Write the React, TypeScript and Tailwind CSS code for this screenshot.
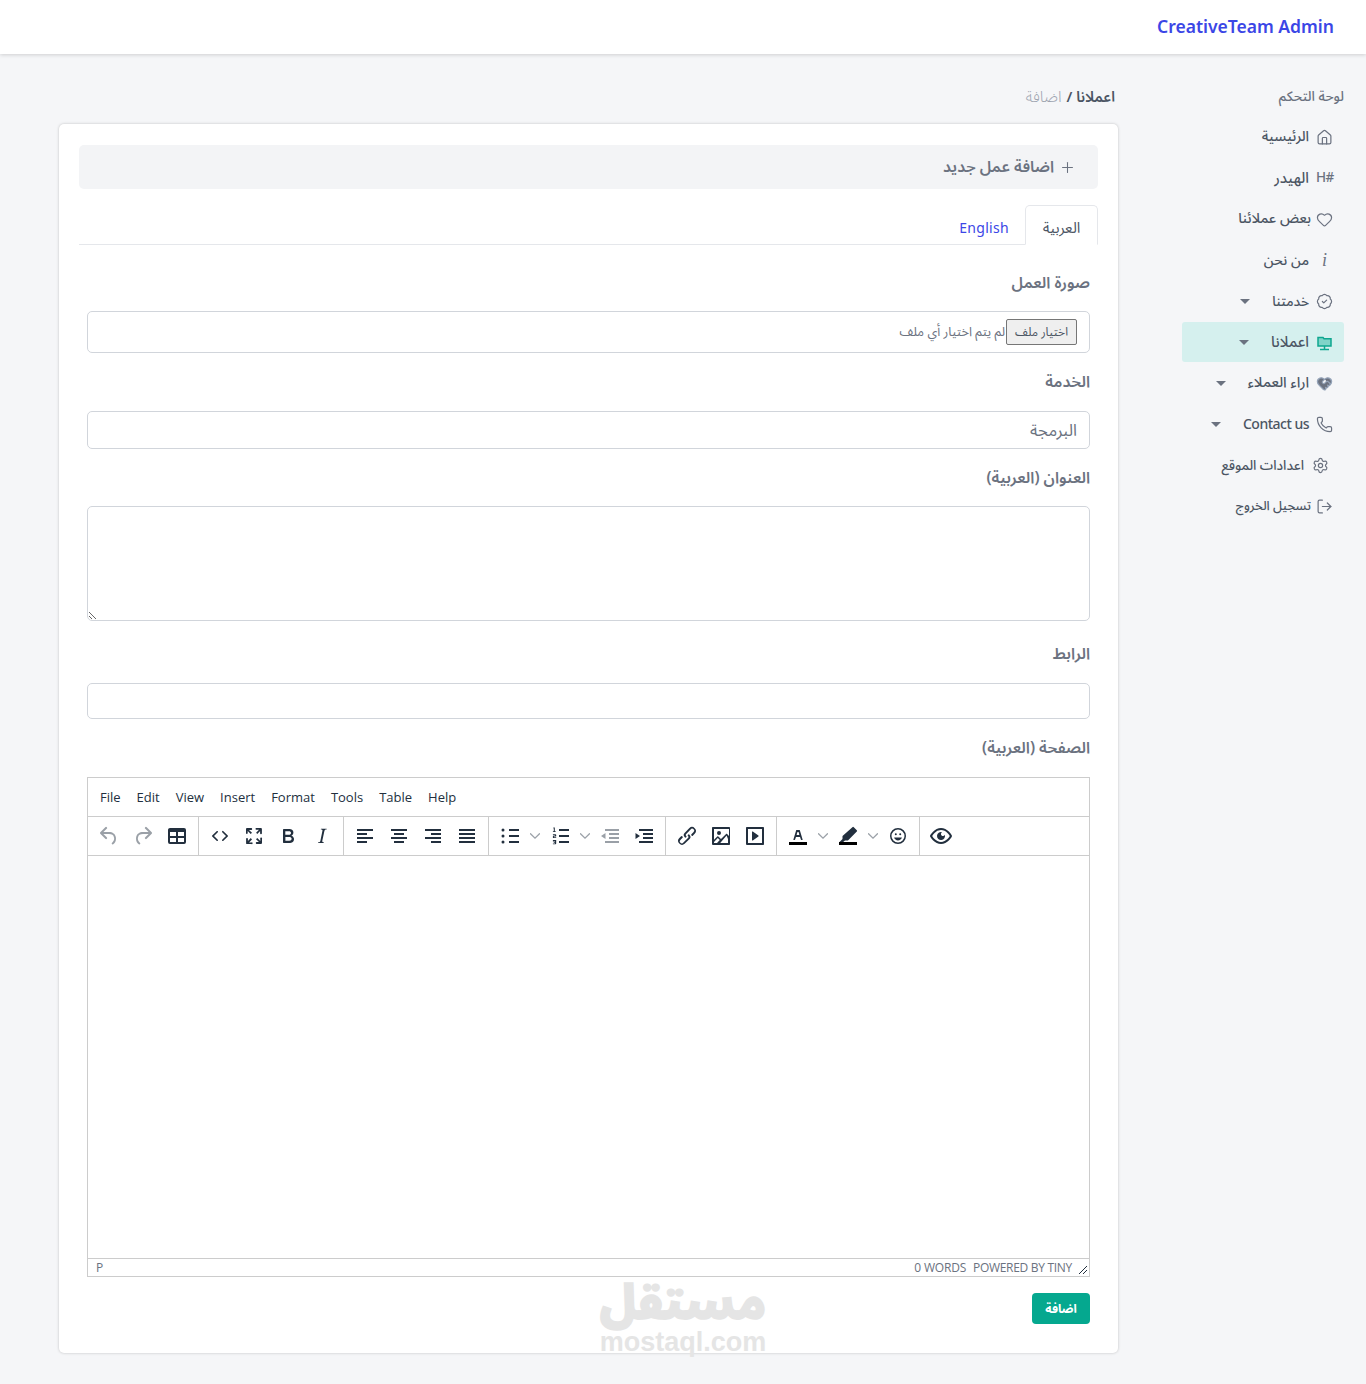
import React from "react";
import { Home, Heart, BadgeCheck, HeartHandshake, Phone, Settings, LogOut, Plus } from "lucide-react";

const FONT = "font-['Noto_Sans','Noto_Sans_Arabic','DejaVu_Sans',sans-serif]";

const T: Record<string, string> = {
  undo: "M6.4 8H12c3.7 0 6.2 2 6.8 5.1.6 2.7-.4 5.6-2.6 7.2-.4.3-1 .2-1.3-.2-.3-.4-.2-1 .2-1.3 1.6-1.2 2.4-3.4 1.9-5.4C16.6 11 14.8 10 12 10H6.4l3.3 3.3a1 1 0 1 1-1.4 1.4l-5-5a1 1 0 0 1 0-1.4l5-5a1 1 0 1 1 1.4 1.4L6.4 8z",
  table: "M19 4a2 2 0 0 1 2 2v12a2 2 0 0 1-2 2H5a2 2 0 0 1-2-2V6c0-1.1.9-2 2-2h14zM5 14v4h6v-4H5zm14 0h-6v4h6v-4zm0-6h-6v4h6V8zM5 12h6V8H5v4z",
  code: "M9.8 15.7c.3.3.3.8 0 1-.3.4-.9.4-1.2 0l-4.4-4.1a.8.8 0 0 1 0-1.2l4.4-4.2c.3-.3.9-.3 1.2 0 .3.3.3.8 0 1.1L6 12l3.8 3.7zM14.2 15.7c-.3.3-.3.8 0 1 .4.4.9.4 1.2 0l4.4-4.1c.3-.3.3-.9 0-1.2l-4.4-4.2a.8.8 0 0 0-1.2 0c-.3.3-.3.8 0 1.1L18 12l-3.8 3.7z",
  full: "M15.3 10l-1.2-1.3 2.9-3h-2.3a.9.9 0 1 1 0-1.7H19c.5 0 .9.4.9.9v4.4a.9.9 0 1 1-1.8 0V7l-2.8 3zm0 4l3 3v-2.3a.9.9 0 1 1 1.7 0V19c0 .5-.4.9-.9.9h-4.4a.9.9 0 1 1 0-1.8H17l-3-2.9 1.3-1.2zM10 15.4l-2.9 3h2.3a.9.9 0 1 1 0 1.7H5a.9.9 0 0 1-.9-.9v-4.4a.9.9 0 1 1 1.8 0V17l2.9-3 1.2 1.4zM8.7 10L5.7 7v2.3a.9.9 0 0 1-1.7 0V5c0-.5.4-.9.9-.9h4.4a.9.9 0 0 1 0 1.8H7l3 2.9L8.7 10z",
  bold: "M7.8 19c-.3 0-.5 0-.6-.2l-.2-.5V5.7c0-.2 0-.4.2-.5l.6-.2h5c1.5 0 2.7.3 3.5 1 .7.6 1.1 1.4 1.1 2.5a3 3 0 0 1-.6 1.9c-.4.6-1 1-1.6 1.2.4.1.9.3 1.3.6s.8.7 1 1.2c.4.4.5 1 .5 1.6 0 1.3-.4 2.3-1.3 3-.8.7-2.1 1-3.8 1H7.8zm5-8.3c.6 0 1.2-.1 1.6-.5.4-.3.6-.7.6-1.3 0-1.1-.8-1.7-2.3-1.7H9.3v3.5h3.4zm.5 6c.7 0 1.3-.1 1.7-.4.4-.4.6-.9.6-1.5s-.2-1-.7-1.4c-.4-.3-1-.4-2-.4H9.4v3.8h4z",
  italic: "M16.7 4.7l-.1.9h-.3c-.6 0-1 0-1.4.3-.3.3-.4.6-.5 1.1l-2.1 9.8v.6c0 .5.4.8 1.4.8h.2l-.2.8H8l.2-.8h.2c1.1 0 1.8-.5 2-1.5l2-9.8.1-.5c0-.6-.4-.8-1.4-.8h-.3l.2-.9h5.9z",
  left: "M4 5h16v2H4zM4 9h10v2H4zM4 13h16v2H4zM4 17h10v2H4z",
  center: "M4 5h16v2H4zM7 9h10v2H7zM4 13h16v2H4zM7 17h10v2H7z",
  right: "M4 5h16v2H4zM10 9h10v2H10zM4 13h16v2H4zM10 17h10v2H10z",
  justify: "M4 5h16v2H4zM4 9h16v2H4zM4 13h16v2H4zM4 17h16v2H4z",
  bull: "M11 5h10v2H11zM11 11h10v2H11zM11 17h10v2H11zM5 4.5a1.5 1.5 0 1 1 0 3 1.5 1.5 0 0 1 0-3zM5 10.5a1.5 1.5 0 1 1 0 3 1.5 1.5 0 0 1 0-3zM5 16.5a1.5 1.5 0 1 1 0 3 1.5 1.5 0 0 1 0-3z",
  num: "M11 5h10v2H11zM11 11h10v2H11zM11 17h10v2H11zM5.6 3.4h1.2v3.9h.9v.8H4.9v-.8h.9V4.3h-.9zM4.9 10.2h2.6c.4 0 .7.3.7.7v1c0 .4-.3.7-.7.7H5.9v.6h2.3v.8H4.9v-1.7c0-.4.3-.7.7-.7h1.4V11H4.9zM4.9 16h3.3v3.6c0 .4-.3.7-.7.7H4.9v-.8H7v-.8H5.7v-.7H7v-.6H4.9z",
  outdent: "M7 5h14v2H7zM11 9h10v2H11zM11 13h10v2H11zM7 17h14v2H7zM7.5 9v6L3 12z",
  indent: "M7 5h14v2H7zM11 9h10v2H11zM11 13h10v2H11zM7 17h14v2H7zM3.5 9L8 12l-4.5 3z",
  link: "M6.2 12.3a1 1 0 0 1 1.4 1.4l-2 2a2 2 0 1 0 2.8 2.8l4.8-4.8a1 1 0 0 0 0-1.4 1 1 0 1 1 1.4-1.3 2.9 2.9 0 0 1 0 4l-5 4.8a3.9 3.9 0 0 1-5.5-5.5l2-2zm11.6-.6a1 1 0 0 1-1.4-1.4l2-2a2 2 0 1 0-2.8-2.8L11 10.3a1 1 0 0 0 0 1.4A1 1 0 1 1 9.6 13a2.9 2.9 0 0 1 0-4L14.4 4a3.9 3.9 0 0 1 5.5 5.5l-2.1 2.2z",
  image: "M5 15.7l3.3-3.2c.3-.3.7-.3 1 0L12 15l5.1-5c.3-.3.7-.3 1 0l1.9 1.9V5H5v10.7zM5 18v1h3l2.8-2.9-2-2L5 17.9zm14-3l-1.4-3.4-6.4 7.5H19v-4zM4 3h16c.6 0 1 .4 1 1v16c0 .6-.4 1-1 1H4a1 1 0 0 1-1-1V4c0-.6.4-1 1-1zm6 8a2 2 0 1 0 0-4 2 2 0 0 0 0 4z",
  embed: "M4 3h16c.6 0 1 .4 1 1v16c0 .6-.4 1-1 1H4a1 1 0 0 1-1-1V4c0-.6.4-1 1-1zm1 2v14h14V5H5zm4.8 2.6l5.6 4a.5.5 0 0 1 0 .8l-5.6 4A.5.5 0 0 1 9 16V8a.5.5 0 0 1 .8-.4z",
  color: "M8.7 16h-.8a.5.5 0 0 1-.5-.6l2.7-9c.1-.3.3-.4.5-.4h2.8c.2 0 .4.1.5.4l2.7 9a.5.5 0 0 1-.5.6h-.8a.5.5 0 0 1-.4-.4l-.7-2.2c0-.3-.3-.4-.5-.4h-3.4c-.2 0-.4.1-.5.4l-.7 2.2c0 .3-.2.4-.4.4zm2.6-7.6l-.6 2a.5.5 0 0 0 .5.6h1.6a.5.5 0 0 0 .5-.6l-.6-2c0-.3-.3-.4-.5-.4h-.4c-.2 0-.4.1-.5.4z",
  high: "M17.8 3.2l3 3a1 1 0 0 1 0 1.4l-8.6 8.6c-.2.2-.4.3-.7.3H9l-1.8 1.4H3.5l3-3v-2.5c0-.3.1-.5.3-.7l9.6-8.5a1 1 0 0 1 1.4 0z",
  emoji: "M9.8 11.2a1 1 0 1 0 0-2 1 1 0 0 0 0 2zm4.4 0a1 1 0 1 0 0-2 1 1 0 0 0 0 2zM12 16.5c1.9 0 3.4-1.2 3.9-2.9H8.1c.5 1.7 2 2.9 3.9 2.9zM12 4a8 8 0 1 0 0 16 8 8 0 0 0 0-16zm0 14.5a6.5 6.5 0 1 1 0-13 6.5 6.5 0 0 1 0 13z",
  eye: "M3.5 12.5c.5.8 1.1 1.6 1.8 2.3 2 2 4.2 3.2 6.7 3.2s4.7-1.2 6.7-3.2a16.2 16.2 0 0 0 2.1-2.8 15.7 15.7 0 0 0-2.1-2.8c-2-2-4.2-3.2-6.7-3.2a9.3 9.3 0 0 0-6.7 3.2A16.2 16.2 0 0 0 3.2 12c0 .2.2.3.3.5zm-2.4-1l.7-1.2L4 7.8C6.2 5.4 8.9 4 12 4c3 0 5.8 1.4 8.1 3.8a18.2 18.2 0 0 1 2.8 3.7v1l-.7 1.2-2.1 2.5c-2.3 2.4-5 3.8-8.1 3.8-3 0-5.8-1.4-8.1-3.8a18.2 18.2 0 0 1-2.8-3.7 1 1 0 0 1 0-1zm12-3.3a2 2 0 1 0 2.7 2.6 4 4 0 1 1-2.7-2.6z",
};

function TI({ name, dim, flip, bar }: { name: string; dim?: boolean; flip?: boolean; bar?: boolean }) {
  return (
    <span className="flex h-[38px] w-[34px] items-center justify-center">
      <svg viewBox="0 0 24 24" className="h-6 w-6" fill="#222f3e" fillRule="evenodd" opacity={dim ? 0.45 : 1}>
        <g transform={flip ? "matrix(-1 0 0 1 24 0)" : undefined}>
          <path d={T[name]} />
        </g>
        {bar && <rect x="3" y="18" width="18" height="3" fill="#000" />}
      </svg>
    </span>
  );
}

function Chev() {
  return (
    <span className="flex h-[38px] w-4 items-center justify-center">
      <svg viewBox="0 0 10 10" className="h-2.5 w-2.5" fill="none" stroke="#222f3e" strokeOpacity="0.45" strokeWidth="1.3" strokeLinecap="round">
        <path d="M0.5 2.8 5 7.2 9.5 2.8" />
      </svg>
    </span>
  );
}

function Group({ children, last }: { children: React.ReactNode; last?: boolean }) {
  return <div className={`flex items-center px-1 ${last ? "" : "border-r border-[#ccc]"}`}>{children}</div>;
}

function Toolbar() {
  return (
    <div className="flex h-[39px] border-b border-[#ccc]" dir="ltr">
      <Group>
        <TI name="undo" dim />
        <TI name="undo" dim flip />
        <TI name="table" />
      </Group>
      <Group>
        <TI name="code" />
        <TI name="full" />
        <TI name="bold" />
        <TI name="italic" />
      </Group>
      <Group>
        <TI name="left" />
        <TI name="center" />
        <TI name="right" />
        <TI name="justify" />
      </Group>
      <Group>
        <TI name="bull" />
        <Chev />
        <TI name="num" />
        <Chev />
        <TI name="outdent" dim />
        <TI name="indent" />
      </Group>
      <Group>
        <TI name="link" />
        <TI name="image" />
        <TI name="embed" />
      </Group>
      <Group>
        <TI name="color" bar />
        <Chev />
        <TI name="high" bar />
        <Chev />
        <TI name="emoji" />
      </Group>
      <Group last>
        <TI name="eye" />
      </Group>
    </div>
  );
}

function Label({ children, className = "" }: { children: React.ReactNode; className?: string }) {
  return <label className={`block -translate-y-px px-2 text-[15.8px] font-semibold leading-5 text-[#6b7280] ${className}`}>{children}</label>;
}

function Tri() {
  return <span className="mr-[15px] h-0 w-0 border-x-[5px] border-t-[5px] border-x-transparent border-t-[#6b7280]" />;
}

const iconCls = "h-[17px] w-[17px] shrink-0 text-[#6b7280]";

function Item({ icon, label, arrow, active, pr = "pr-[11px]", gap = "gap-[7px]", size = "text-[14.1px] -translate-y-px" }: { icon: React.ReactNode; label: string; arrow?: boolean; active?: boolean; pr?: string; gap?: string; size?: string }) {
  return (
    <div className={`mb-px flex h-10 items-center rounded-[3px] ${pr} ${gap} ${active ? "bg-[#d5f0ee]" : ""}`}>
      {icon}
      <span className={`font-medium text-[#4b5563] ${size}`}>{label}</span>
      {arrow && <Tri />}
    </div>
  );
}

function Sidebar() {
  return (
    <aside className="w-[162px] shrink-0 pt-[32px]">
      <div className="mb-[11px] text-[13.7px] font-medium leading-5 text-[#6b7280]">لوحة التحكم</div>
      <Item icon={<Home className={iconCls} strokeWidth={1.7} />} label="الرئيسية" />
      <Item icon={<span dir="ltr" className="w-[17px] shrink-0 text-[13.5px] font-medium leading-none tracking-[-0.5px] text-[#6b7280]">H#</span>} label="الهيدر" size="text-[14.8px] -translate-y-px" />
      <Item icon={<Heart className={iconCls} strokeWidth={1.7} />} label="بعض عملائنا" gap="gap-[5px]" size="text-[14.2px] -translate-y-px" />
      <Item icon={<span className="w-[17px] shrink-0 text-center font-['Liberation_Serif',serif] text-lg italic leading-none text-[#6b7280]">i</span>} label="من نحن" size="text-[14px] -translate-y-px" />
      <Item icon={<BadgeCheck className={iconCls} strokeWidth={1.7} />} label="خدمتنا" arrow size="text-[13.5px]" />
      <Item active icon={
        <svg viewBox="0 0 17 17" className="h-[17px] w-[17px] shrink-0" fill="none">
          <path d="M2 3.5h5l1 1.3h7v7.2H2z" fill="#7fd4c8" stroke="#0ea68f" strokeWidth="1.5" />
          <path d="M8.5 12v3M4 15.5h9" stroke="#0ea68f" strokeWidth="1.5" />
        </svg>
      } label="اعملانا" arrow size="text-[14.8px] -translate-y-px" />
      <Item icon={<HeartHandshake className={iconCls} strokeWidth={1.8} fill="#6b7280" stroke="#94a3b8" />} label="اراء العملاء" arrow size="text-[14.5px] -translate-y-px" />
      <Item icon={<Phone className={iconCls} strokeWidth={1.7} />} label="Contact us" arrow size="text-sm tracking-[-0.5px]" />
      <Item icon={<Settings className={iconCls} strokeWidth={1.7} />} label="اعدادات الموقع" pr="pr-[15px]" gap="gap-[8px]" size="text-[13.4px]" />
      <Item icon={<LogOut className={iconCls} strokeWidth={1.7} />} label="تسجيل الخروج" gap="gap-[5px]" size="text-[12.7px]" />
    </aside>
  );
}

const fieldCls = "block w-full rounded-[5px] border border-[#d1d5db] bg-white px-3 text-[#6b7280] outline-none";

function Editor() {
  return (
    <div className="mt-[19px] flex h-[500px] flex-col border border-[#ccc] font-['Open_Sans',sans-serif]" dir="ltr">
      <div className="flex h-[39px] items-center gap-4 border-b border-[#ccc] px-3 pt-px text-[13px] text-[#222f3e]">
        {["File", "Edit", "View", "Insert", "Format", "Tools", "Table", "Help"].map((m) => (
          <span key={m}>{m}</span>
        ))}
      </div>
      <Toolbar />
      <div className="flex-1" />
      <div className="flex h-[18px] shrink-0 items-center border-t border-[#ccc] pl-2 text-xs uppercase text-[#6b7280]">
        <span>p</span>
        <span className="ml-auto tracking-[-0.2px]">0 words</span>
        <span className="ml-[7px] tracking-[-0.3px]">Powered by Tiny</span>
        <svg viewBox="0 0 10 10" className="ml-[6px] mr-px mt-1 h-2.5 w-2.5" stroke="#222f3e" strokeWidth="1" fill="none">
          <path d="M1 9 9 1M5 9 9 5" />
        </svg>
      </div>
    </div>
  );
}

function Card() {
  return (
    <section className="h-[1229px] min-w-0 rounded-[5px] bg-white pb-5 pl-5 pr-5 pt-[21px] shadow-[0_0_3px_rgba(0,0,0,0.22)]">
      <div className="flex h-11 items-center gap-[5px] rounded-[5px] bg-[#f3f4f6] px-[22px] text-[15.8px] font-semibold text-[#6b7280]">
        <Plus className="h-[17px] w-[17px]" strokeWidth={1.5} />
        <span>اضافة عمل جديد</span>
      </div>
      <div className="mt-4 flex h-10 items-end border-b border-[#e5e7eb]">
        <div className="-mb-px flex h-10 w-[73px] items-center justify-center rounded-t-[5px] border border-b-white border-[#e5e7eb] bg-white pt-1 text-[15px] text-[#4b5563]">العربية</div>
        <div className="flex h-10 items-center px-4 pt-[7px] text-sm tracking-[0.3px] text-[#3b46e6]">English</div>
      </div>
      <Label className="mt-[28px]">صورة العمل</Label>
      <div className="mx-2 mt-[18px] flex h-[42px] items-center gap-px rounded-[5px] border border-[#d1d5db] pr-[12px]">
        <button className="flex h-[26px] w-[71px] items-center justify-center rounded-[2px] border border-[#767676] bg-[#efefef] text-xs text-[#4b5563]">اختيار ملف</button>
        <span className="text-[12.8px] text-[#6b7280]">لم يتم اختيار أي ملف</span>
      </div>
      <Label className="mt-[19px]">الخدمة</Label>
      <div className="mx-2 mt-[19px]">
        <input className={`${fieldCls} h-[38px] text-right text-[16.5px]`} defaultValue="البرمجة" />
      </div>
      <Label className="mt-[19px]">العنوان (العربية)</Label>
      <div className="mx-2 mt-[18px]">
        <textarea className={`${fieldCls} h-[115px] resize-y`} />
      </div>
      <Label className="mt-[23px]">الرابط</Label>
      <div className="mx-2 mt-[19px]">
        <input className={`${fieldCls} h-[36px]`} />
      </div>
      <Label className="mt-[19px]">الصفحة (العربية)</Label>
      <div className="mx-2">
        <Editor />
      </div>
      <div className="mx-2 mt-4">
        <button className="flex h-[31px] w-[58px] items-center justify-center rounded-[4px] bg-[#05a88f] text-xs font-bold text-white">اضافة</button>
      </div>
    </section>
  );
}

export default function App() {
  return (
    <div dir="rtl" className={`relative h-[1384px] overflow-hidden bg-[#f5f6f8] ${FONT}`}>
      <header className="flex h-[54px] items-center justify-start bg-white pr-8 shadow-[0_1px_4px_rgba(0,0,0,0.16)]">
        <span dir="ltr" className="-translate-y-px text-[17.5px] font-semibold text-[#3b46e6]">CreativeTeam Admin</span>
      </header>
      <main className="flex gap-16 pl-[58px] pr-[22px]">
        <Sidebar />
        <div className="min-w-0 flex-1 pl-px pt-[33px]">
          <div className="mb-[17px] flex h-5 items-center gap-[5px] pr-[3px]">
            <span className="text-[14.6px] font-semibold text-[#4b5563]">اعملانا /</span>
            <span className="text-[15.5px] font-light text-[#9ca3af]">اضافة</span>
          </div>
          <Card />
        </div>
      </main>
      <div className="pointer-events-none absolute left-[600px] top-[1272px] flex w-[166px] flex-col items-center text-[#e5e5e5]">
        <span className="text-[47px] font-black leading-[58px] [-webkit-text-stroke:1.5px_#e5e5e5]">مستقل</span>
        <span dir="ltr" className="font-['Liberation_Sans',sans-serif] text-[27px] font-bold leading-[24px]">mostaql.com</span>
      </div>
    </div>
  );
}
